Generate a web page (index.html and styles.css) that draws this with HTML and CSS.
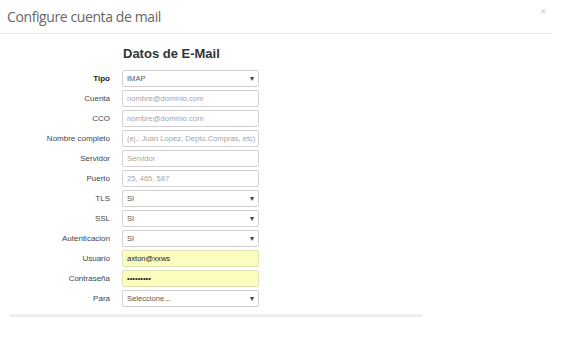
FILE: index.html
```html
<!DOCTYPE html>
<html lang="es">
<head>
    <meta charset="UTF-8">
    <title>Configure cuenta de mail</title>
    <link rel="stylesheet" href="styles.css">
</head>
<body>
    <div class="modal">
        <div class="modal-header">
            <h4 class="modal-title">Configure cuenta de mail</h4>
            <span class="close">&times;</span>
        </div>
        <div class="modal-body">
            <div class="panel">
                <h3 class="panel-title">Datos de E-Mail</h3>
                <form class="form">
                    <label class="bold">Tipo</label>
                    <div class="select-wrap">
                        <select class="field"><option>IMAP</option></select>
                    </div>

                    <label>Cuenta</label>
                    <input class="field" type="text" placeholder="nombre@dominio.com">

                    <label>CCO</label>
                    <input class="field" type="text" placeholder="nombre@dominio.com">

                    <label>Nombre completo</label>
                    <input class="field" type="text" placeholder="(ej.: Juan Lopez, Depto.Compras, etc)">

                    <label>Servidor</label>
                    <input class="field" type="text" placeholder="Servidor">

                    <label>Puerto</label>
                    <input class="field" type="text" placeholder="25, 465, 587">

                    <label>TLS</label>
                    <div class="select-wrap">
                        <select class="field"><option>SI</option></select>
                    </div>

                    <label>SSL</label>
                    <div class="select-wrap">
                        <select class="field"><option>SI</option></select>
                    </div>

                    <label>Autenticacion</label>
                    <div class="select-wrap">
                        <select class="field"><option>SI</option></select>
                    </div>

                    <label>Usuario</label>
                    <input class="field autofill" type="text" value="axton@xxws">

                    <label>Contraseña</label>
                    <input class="field autofill" type="password" value="123456789">

                    <label>Para</label>
                    <div class="select-wrap">
                        <select class="field"><option>Seleccione...</option></select>
                    </div>
                </form>
            </div>
        </div>
    </div>
</body>
</html>
```

FILE: styles.css
```css
body {
    margin: 0;
    background-color: #fff;
    font-family: "Liberation Sans", Arial, sans-serif;
    color: #333;
}

.modal {
    width: 552px;
}

.modal-header {
    display: flex;
    justify-content: space-between;
    align-items: center;
    height: 33px;
    padding: 0 6px 0 7px;
    border-bottom: 1px solid #e8e8e8;
}

.modal-title {
    margin: -1px 0 0;
    font-family: "Open Sans", sans-serif;
    font-size: 14px;
    letter-spacing: -0.4px;
    font-weight: 400;
    color: #666;
}

.close {
    font-size: 10px;
    color: #c8c8c8;
    margin-top: -10px;
}

.modal-body {
    padding-left: 10px;
}

.panel {
    width: 412px;
    padding: 12px 0 7px;
    border-bottom: 3px solid #eeeeee;
    box-shadow: 0 1px 1px #f4f4f4;
}

.panel-title {
    margin: 0 0 8px 113px;
    font-size: 13px;
    line-height: 16px;
    font-weight: bold;
    color: #333;
}

.form {
    display: grid;
    grid-template-columns: 100px 137px;
    grid-auto-rows: 17px;
    column-gap: 12px;
    row-gap: 3px;
}

.form label {
    align-self: center;
    text-align: right;
    font-size: 8px;
    color: #444;
}

.form label.bold {
    color: #222;
    font-weight: bold;
}

.field {
    display: block;
    box-sizing: border-box;
    width: 137px;
    height: 17px;
    margin: 0;
    padding: 0 2px 0 4px;
    border: 1px solid #d2d2d2;
    border-radius: 2px;
    background-color: #fff;
    font-family: "Liberation Sans", Arial, sans-serif;
    font-size: 7.6px;
    color: #555;
    outline: none;
}

.field::placeholder {
    color: #a5a5a5;
}

select.field {
    appearance: none;
    -webkit-appearance: none;
}

.select-wrap {
    position: relative;
    height: 17px;
}

.select-wrap::after {
    content: "\25BE";
    position: absolute;
    right: 5px;
    top: 0;
    line-height: 17px;
    font-size: 8px;
    color: #444;
    pointer-events: none;
}

.autofill {
    background-color: #fafdbe;
    border-color: #e2e2b6;
    color: #222;
}
```
